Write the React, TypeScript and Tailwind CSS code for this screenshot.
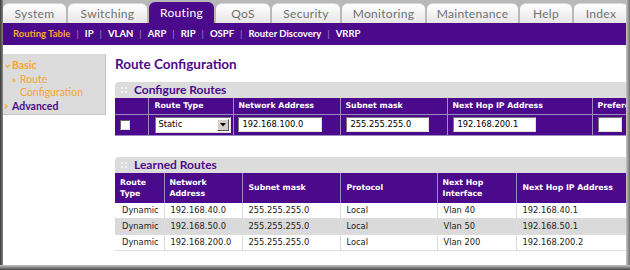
import React from "react";

const tabs = [
  { label: "System", w: 63 },
  { label: "Switching", w: 79 },
  { label: "Routing", w: 65, active: true },
  { label: "QoS", w: 54 },
  { label: "Security", w: 68 },
  { label: "Monitoring", w: 83 },
  { label: "Maintenance", w: 91 },
  { label: "Help", w: 52 },
  { label: "Index", w: 54 },
];

const subnav = ["Routing Table", "IP", "VLAN", "ARP", "RIP", "OSPF", "Router Discovery", "VRRP"];

const learned = [
  ["Dynamic", "192.168.40.0", "255.255.255.0", "Local", "Vlan 40", "192.168.40.1"],
  ["Dynamic", "192.168.50.0", "255.255.255.0", "Local", "Vlan 50", "192.168.50.1"],
  ["Dynamic", "192.168.200.0", "255.255.255.0", "Local", "Vlan 200", "192.168.200.2"],
];

function Grip() {
  return (
    <svg width="6" height="6" viewBox="0 0 6 6" className="mr-[7px]">
      <rect x="0" y="0" width="2" height="2" fill="#f4f4f4" />
      <rect x="4" y="0" width="2" height="2" fill="#f4f4f4" />
      <rect x="0" y="4" width="2" height="2" fill="#f4f4f4" />
      <rect x="4" y="4" width="2" height="2" fill="#f4f4f4" />
    </svg>
  );
}

function SectionBar({ title }: { title: string }) {
  return (
    <div className="h-[16px] bg-[#dcdcdc] rounded-tl-[4px] flex items-center pl-[6px] text-[12px] font-bold text-[#4b0a8c]" style={{ fontFamily: "Lato, sans-serif" }}>
      <Grip />
      <span className="leading-none">{title}</span>
    </div>
  );
}

function TextInput({ value, w }: { value: string; w: number }) {
  return (
    <div
      className="h-[15px] bg-white border border-t-[#7a7a7a] border-l-[#7a7a7a] border-r-[#e0e0e0] border-b-[#e0e0e0] flex items-center pl-[4px] text-[8.3px] text-black"
      style={{ width: w }}
    >
      {value}
    </div>
  );
}

export default function App() {
  const tableFont = { fontFamily: "'DejaVu Sans', Verdana, sans-serif" };
  return (
    <div className="w-[630px] h-[270px] overflow-hidden flex flex-col bg-white" style={{ fontFamily: "Lato, 'Open Sans', sans-serif" }}>
      <div className="flex flex-1 min-h-0">
        {/* left frame */}
        <div className="w-[3px] bg-gradient-to-r from-[#3a3a3a] to-[#8a8a8a] shrink-0" />
        <div className="flex-1 min-w-0 flex flex-col">
          {/* tabs */}
          <div className="h-[23px] bg-[#b8b8b8] flex items-end shrink-0">
            {tabs.map((t) => (
              <div
                key={t.label}
                className={
                  t.active
                    ? "h-[21px] mr-[2px] rounded-t-[6px] bg-[#4b0a8c] text-white flex items-center justify-center text-[12px] font-normal tracking-[0.3px] shrink-0"
                    : "h-[20px] mr-[2px] rounded-t-[6px] bg-gradient-to-b from-[#ffffff] to-[#e6e6e6] text-[#707070] flex items-center justify-center text-[12px] font-normal tracking-[0.3px] shrink-0 border-t border-[#d8d8d8]"
                }
                style={{ width: t.w }}
              >
                {t.label}
              </div>
            ))}
          </div>
          {/* subnav */}
          <div className="h-[22px] bg-[#4b0a8c] flex items-center pl-[10px] text-[9.5px] font-bold shrink-0">
            {subnav.map((s, i) => (
              <React.Fragment key={s}>
                {i > 0 && <span className="text-[#9a86b8] font-normal mx-[6px]">|</span>}
                <span className={i === 0 ? "text-[#f6a72c]" : "text-white"}>{s}</span>
              </React.Fragment>
            ))}
          </div>
          {/* body */}
          <div className="flex flex-1 min-h-0 overflow-hidden">
            {/* sidebar */}
            <div className="w-[103px] h-[61px] mt-[9px] bg-[#dcdcdc] border-r border-b border-[#c4c4c4] shrink-0 pt-[5px] text-[10.5px] font-bold leading-[13.5px]">
              <div className="flex items-center text-[#f6a72c]">
                <span className="w-[9px] pl-[2px] flex items-center">
                  <svg width="5" height="4" viewBox="0 0 5 4"><path d="M0.5 0.8L2.5 3L4.5 0.8" stroke="#f6a72c" strokeWidth="1.2" fill="none" /></svg>
                </span>
                <span>Basic</span>
              </div>
              <div className="flex items-center text-[#f6a72c] font-normal">
                <span className="w-[9px]" />
                <span className="w-[8px] text-[9px] font-bold">»</span>
                <span>Route</span>
              </div>
              <div className="text-[#f6a72c] font-normal pl-[17px]">Configuration</div>
              <div className="flex items-center text-[#4b0a8c]">
                <span className="w-[9px] pl-[1px] flex items-center">
                  <svg width="4" height="5" viewBox="0 0 4 5"><path d="M0.8 0.5L3 2.5L0.8 4.5" stroke="#f6a72c" strokeWidth="1.2" fill="none" /></svg>
                </span>
                <span>Advanced</span>
              </div>
            </div>
            {/* main */}
            <div className="ml-[9px] flex-1 min-w-0 overflow-hidden">
              <div className="mt-[11px] text-[13.5px] font-bold text-[#4b0a8c] leading-[16px]">Route Configuration</div>
              <div className="mt-[10px] w-[540px]">
                <SectionBar title="Configure Routes" />
                <table className="table-fixed border-collapse bg-[#4b0a8c] text-white" style={tableFont}>
                  <colgroup>
                    <col style={{ width: 33 }} />
                    <col style={{ width: 85 }} />
                    <col style={{ width: 107 }} />
                    <col style={{ width: 107 }} />
                    <col style={{ width: 145 }} />
                    <col style={{ width: 60 }} />
                  </colgroup>
                  <tbody>
                    <tr className="h-[16px] text-[7.8px] font-bold">
                      <td className="border border-[#9d8cc4] border-t-0 border-l-0" />
                      <td className="border border-[#9d8cc4] border-t-0 pl-[6px]">Route Type</td>
                      <td className="border border-[#9d8cc4] border-t-0 pl-[5px]">Network Address</td>
                      <td className="border border-[#9d8cc4] border-t-0 pl-[5px]">Subnet mask</td>
                      <td className="border border-[#9d8cc4] border-t-0 pl-[5px]">Next Hop IP Address</td>
                      <td className="border border-[#9d8cc4] border-t-0 border-r-0 pl-[5px] whitespace-nowrap overflow-hidden">Preference</td>
                    </tr>
                    <tr className="h-[21px]">
                      <td className="border border-[#9d8cc4] border-l-0 pl-[5px]">
                        <div className="w-[10px] h-[10px] bg-white border border-t-[#666] border-l-[#666] border-r-[#ddd] border-b-[#ddd]" />
                      </td>
                      <td className="border border-[#9d8cc4] pl-[6px]">
                        <div className="w-[76px] h-[16px] bg-white border border-t-[#777] border-l-[#777] border-r-[#ddd] border-b-[#ddd] flex items-center">
                          <span className="flex-1 pl-[3px] text-[8.3px] text-black">Static</span>
                          <div className="w-[12px] h-[12px] mr-[1px] bg-[#d4d0c8] border border-t-white border-l-white border-r-[#555] border-b-[#555] flex items-center justify-center">
                            <svg width="6" height="4" viewBox="0 0 6 4"><path d="M0 0h6L3 3.5z" fill="#000" /></svg>
                          </div>
                        </div>
                      </td>
                      <td className="border border-[#9d8cc4] pl-[4px]"><TextInput value="192.168.100.0" w={84} /></td>
                      <td className="border border-[#9d8cc4] pl-[5px]"><TextInput value="255.255.255.0" w={83} /></td>
                      <td className="border border-[#9d8cc4] pl-[5px]"><TextInput value="192.168.200.1" w={83} /></td>
                      <td className="border border-[#9d8cc4] border-r-0 pl-[5px]"><TextInput value="" w={24} /></td>
                    </tr>
                  </tbody>
                </table>
              </div>
              <div className="mt-[21px] w-[511px]">
                <SectionBar title="Learned Routes" />
                <table className="table-fixed border-collapse w-[511px] border-b border-r border-[#d0d0d0]" style={tableFont}>
                  <colgroup>
                    <col style={{ width: 49 }} />
                    <col style={{ width: 78 }} />
                    <col style={{ width: 98 }} />
                    <col style={{ width: 97 }} />
                    <col style={{ width: 79 }} />
                    <col style={{ width: 110 }} />
                  </colgroup>
                  <tbody>
                    <tr className="h-[30px] bg-[#4b0a8c] text-white text-[7.8px] font-bold leading-[11px]">
                      <td className="border-r border-[#9d8cc4] pl-[5px]">Route<br />Type</td>
                      <td className="border-r border-[#9d8cc4] pl-[5px]">Network<br />Address</td>
                      <td className="border-r border-[#9d8cc4] pl-[6px]">Subnet mask</td>
                      <td className="border-r border-[#9d8cc4] pl-[6px]">Protocol</td>
                      <td className="border-r border-[#9d8cc4] pl-[5px]">Next Hop<br />Interface</td>
                      <td className="pl-[6px]">Next Hop IP Address</td>
                    </tr>
                    {learned.map((r, i) => (
                      <tr key={i} className={"h-[16px] text-[8.3px] text-[#222] " + (i === 1 ? "bg-[#dadada]" : "bg-white")}>
                        {r.map((c, j) => (
                          <td key={j} className={"border-r border-b border-[#dcdcdc] " + (j === 0 ? "pl-[7px]" : "pl-[6px]")}>{c}</td>
                        ))}
                      </tr>
                    ))}
                  </tbody>
                </table>
              </div>
            </div>
          </div>
        </div>
        {/* right frame */}
        <div className="w-[4px] bg-gradient-to-r from-[#c8c8c8] to-[#707070] shrink-0" />
      </div>
      {/* bottom frame */}
      <div className="h-[5px] bg-gradient-to-b from-[#c8c8c8] to-[#4a4a4a] shrink-0" />
    </div>
  );
}
